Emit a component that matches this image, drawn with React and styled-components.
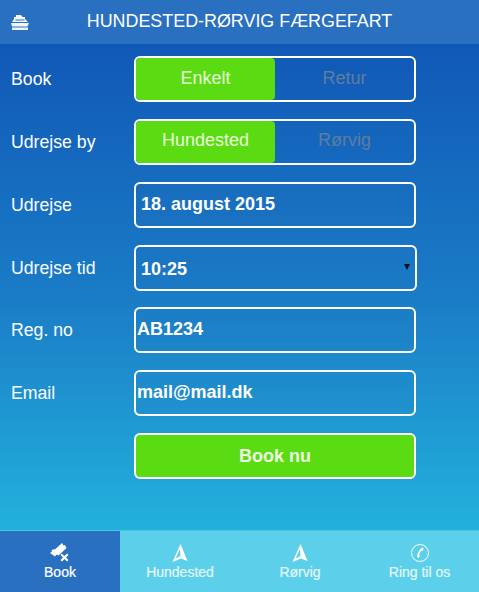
import React from "react";
import styled, { createGlobalStyle } from "styled-components";

const GlobalStyle = createGlobalStyle`
  html, body {
    margin: 0;
    padding: 0;
    height: 100%;
  }

  body {
    font-family: "Liberation Sans", Arial, sans-serif;
    overflow: hidden;
  }
`;

const Page = styled.div`
  display: flex;
  flex-direction: column;
  width: 479px;
  height: 592px;
  color: white;
  background: linear-gradient(to bottom, #0f52b4 0%, #1a7cc6 50%, #25bfe2 100%);
`;

const Header = styled.header`
  display: flex;
  align-items: center;
  height: 44px;
  padding-left: 11px;
  background: #2a70c1;
`;

const HeaderTitle = styled.h1`
  flex: 1;
  margin: 0 0 3px;
  padding-right: 29px;
  font-size: 17.9px;
  font-weight: normal;
  line-height: 40px;
  text-align: center;
`;

const Form = styled.form`
  flex: 1;
  display: flex;
  flex-direction: column;
  gap: 16.83px;
  padding: 12.1px 0 0 11px;
`;

const Row = styled.div`
  display: grid;
  grid-template-columns: 123px 282px;
  align-items: center;
  height: 46px;
`;

const Label = styled.span`
  padding-top: 1px;
  font-size: 17.7px;
`;

const Toggle = styled.div`
  display: flex;
  height: 46px;
  box-sizing: border-box;
  border: 2px solid white;
  border-radius: 6px;
  overflow: hidden;
`;

const ToggleOption = styled.div`
  flex: 0 0 50%;
  display: flex;
  align-items: center;
  justify-content: center;
  padding-bottom: 2px;
  box-sizing: border-box;
  font-size: 18px;
  border-radius: 0 4px 4px 0;
  background: ${({ $active }) => ($active ? "#5bdb11" : "transparent")};
  color: ${({ $active }) => ($active ? "#e8fbdc" : "#5f7d9f")};
`;

const Field = styled.div`
  display: flex;
  align-items: center;
  justify-content: space-between;
  height: 46px;
  box-sizing: border-box;
  border: 2px solid white;
  border-radius: 6px;
  padding: 0 ${({ $pad }) => $pad || 1}px 1px;
  font-size: 18px;
  font-weight: bold;
  background: rgba(42, 112, 193, 0.12);
`;

const SelectField = styled(Field)`
  margin-right: -1px;
  padding: 3px 5px 0;
`;

const SelectArrow = styled.span`
  width: 0;
  height: 0;
  margin-bottom: 5px;
  border-left: 3px solid transparent;
  border-right: 3px solid transparent;
  border-top: 6px solid #0b1020;
`;

const SubmitButton = styled.button`
  height: 46px;
  border: 2px solid white;
  border-radius: 6px;
  padding: 0;
  background: #5bdb11;
  color: #eefbe4;
  font-family: inherit;
  font-size: 18px;
  font-weight: bold;
`;

const TabBar = styled.nav`
  display: grid;
  grid-template-columns: 120px 120px 120px 119px;
  height: 62px;
  box-sizing: border-box;
  border-top: 1px solid #45c6e7;
  background: #5ccfea;
`;

const Tab = styled.div`
  display: flex;
  flex-direction: column;
  align-items: center;
  padding-top: 12px;
  box-sizing: border-box;
  font-size: 14px;
  line-height: 16px;
  background: ${({ $active }) => ($active ? "#2a70c1" : "transparent")};
  color: ${({ $active }) => ($active ? "white" : "#e4f8fd")};
  -webkit-text-stroke: 0.2px currentColor;
`;

const TabIcon = styled.svg`
  display: block;
  width: 20px;
  height: 20px;
  margin-bottom: 1px;
`;

const ShipIcon = () => (
  <svg width="18" height="15" viewBox="0 0 18 15" fill="#f2f7fc">
    <path d="M5 0h5l1.500 2H14v2l3 3H1l2-3V2h2z" />
    <path d="M0 8h18l-1.500 3.500H1z" />
    <path d="M1 12.500h16V15H1z" />
    <path d="M4.500 4.500h9v1h-9z" fill="#2a70c1" />
  </svg>
);

const TicketIcon = () => (
  <TabIcon viewBox="0 0 20 20" fill="white">
    <path d="M12 0l1.500 2.500L15 2l1.500 3-8 7.500-2-1-1.500 2L0 10l2-1.500L1.500 7l4-1z" />
    <path d="M11.500 10.500l3 2.500 2.500-2.500 1.500 1.500-2.500 2.500 2.500 2.500-1.500 1.500-2.500-2.500-2.500 2.500-1.500-1.500 2.500-2.500-2.500-2.500z" />
  </TabIcon>
);

const SailIcon = () => (
  <TabIcon viewBox="0 0 20 20" fill="white" fillRule="evenodd">
    <path d="M10.500 1l7 17-6.500-2.500L2.500 19zM10 6l-4.500 9.500 5-2.500z" />
  </TabIcon>
);

const PhoneIcon = () => (
  <TabIcon viewBox="0 0 20 20" fill="none">
    <circle cx="10" cy="10" r="8.500" stroke="white" strokeWidth="1" />
    <path
      d="M12.500 4.500c-2.500 1-5 5.500-5.500 9.500l1.500 1 1.500-2-1-1c.5-1.500 1.500-3.500 2.500-4.500l1.200.5 1-2.500z"
      fill="white"
    />
  </TabIcon>
);

const App = () => {
  return (
    <Page>
      <GlobalStyle />
      <Header>
        <ShipIcon />
        <HeaderTitle>HUNDESTED-RØRVIG FÆRGEFART</HeaderTitle>
      </Header>
      <Form>
        <Row>
          <Label>Book</Label>
          <Toggle>
            <ToggleOption $active>Enkelt</ToggleOption>
            <ToggleOption>Retur</ToggleOption>
          </Toggle>
        </Row>
        <Row>
          <Label>Udrejse by</Label>
          <Toggle>
            <ToggleOption $active>Hundested</ToggleOption>
            <ToggleOption>Rørvig</ToggleOption>
          </Toggle>
        </Row>
        <Row>
          <Label>Udrejse</Label>
          <Field $pad={5}>18. august 2015</Field>
        </Row>
        <Row>
          <Label>Udrejse tid</Label>
          <SelectField>
            10:25
            <SelectArrow />
          </SelectField>
        </Row>
        <Row>
          <Label>Reg. no</Label>
          <Field>AB1234</Field>
        </Row>
        <Row>
          <Label>Email</Label>
          <Field>mail@mail.dk</Field>
        </Row>
        <Row>
          <span />
          <SubmitButton type="button">Book nu</SubmitButton>
        </Row>
      </Form>
      <TabBar>
        <Tab $active>
          <TicketIcon />
          Book
        </Tab>
        <Tab>
          <SailIcon />
          Hundested
        </Tab>
        <Tab>
          <SailIcon />
          Rørvig
        </Tab>
        <Tab>
          <PhoneIcon />
          Ring til os
        </Tab>
      </TabBar>
    </Page>
  );
};

export default App;
